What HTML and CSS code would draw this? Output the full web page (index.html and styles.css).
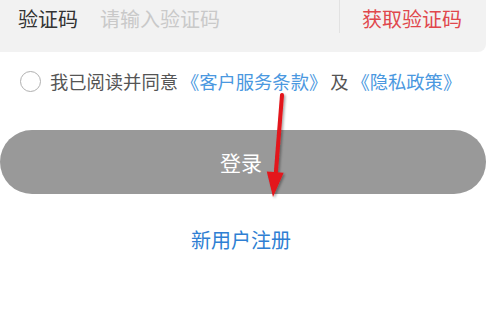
FILE: index.html
```html
<!DOCTYPE html>
<html lang="zh-CN">
<head>
<meta charset="utf-8">
<link rel="stylesheet" href="styles.css">
</head>
<body>
<div class="page">
  <div class="code-box">
    <div class="code-row">
      <span class="label">验证码</span>
      <span class="placeholder">请输入验证码</span>
      <span class="divider"></span>
      <span class="get-code">获取验证码</span>
    </div>
  </div>
  <div class="agree">
    <span class="radio"></span>
    <span class="agree-text">我已阅读并同意<span class="link">《客户服务条款》</span>及<span class="link">《隐私政策》</span></span>
  </div>
  <div class="login">登录</div>
  <div class="register">新用户注册</div>
  <svg class="arrow" width="498" height="313" viewBox="0 0 498 313">
    <defs>
      <filter id="sh" x="-50%" y="-50%" width="200%" height="200%">
        <feDropShadow dx="1.5" dy="1.5" stdDeviation="1.2" flood-color="#000" flood-opacity="0.35"/>
      </filter>
    </defs>
    <g filter="url(#sh)" fill="#e3141a" stroke="#e3141a">
      <line x1="282" y1="95" x2="275.6" y2="176" stroke-width="4" stroke-linecap="round"/>
      <polygon points="273,197 266.8,171.4 283.6,172.8" stroke="none"/>
    </g>
  </svg>
</div>
</body>
</html>
```

FILE: styles.css
```css
html, body {
  margin: 0;
  padding: 0;
  background: #ffffff;
}
.page {
  position: relative;
  width: 498px;
  height: 313px;
  overflow: hidden;
  font-family: "Noto Sans CJK SC", "Noto Sans", sans-serif;
  text-spacing-trim: space-all;
}
.code-box {
  width: 486px;
  height: 52px;
  box-sizing: border-box;
  background: #f2f2f2;
  border-radius: 0 0 8px 0;
}
.code-row {
  display: flex;
  align-items: center;
  height: 36px;
  padding: 0 24px 0 18px;
  font-size: 20px;
}
.label {
  color: #333333;
}
.placeholder {
  color: #c9c9c9;
  margin-left: 22px;
  flex: 1;
}
.divider {
  align-self: flex-start;
  width: 1px;
  height: 33px;
  background: #e2e2e2;
  margin-right: 22px;
}
.get-code {
  color: #e0474c;
}
.agree {
  display: flex;
  align-items: center;
  height: 40px;
  margin-top: 9px;
  padding-left: 20px;
}
.radio {
  width: 19px;
  height: 19px;
  border: 1px solid #b0b0b0;
  border-radius: 50%;
  margin-right: 9px;
}
.agree-text {
  font-size: 18.3px;
  color: #555555;
  white-space: nowrap;
}
.link {
  color: #4a98e0;
  margin: 0 3px;
}
.login {
  margin-top: 29px;
  width: 486px;
  height: 64px;
  border-radius: 32px;
  background: #999999;
  color: #ffffff;
  font-size: 21px;
  display: flex;
  align-items: center;
  justify-content: center;
  padding-right: 4px;
  box-sizing: border-box;
}
.register {
  margin-top: 32px;
  height: 28px;
  line-height: 28px;
  text-align: center;
  width: 482px;
  font-size: 20px;
  color: #2f7fd3;
}
.arrow {
  position: absolute;
  left: 0;
  top: 0;
  pointer-events: none;
}
```
